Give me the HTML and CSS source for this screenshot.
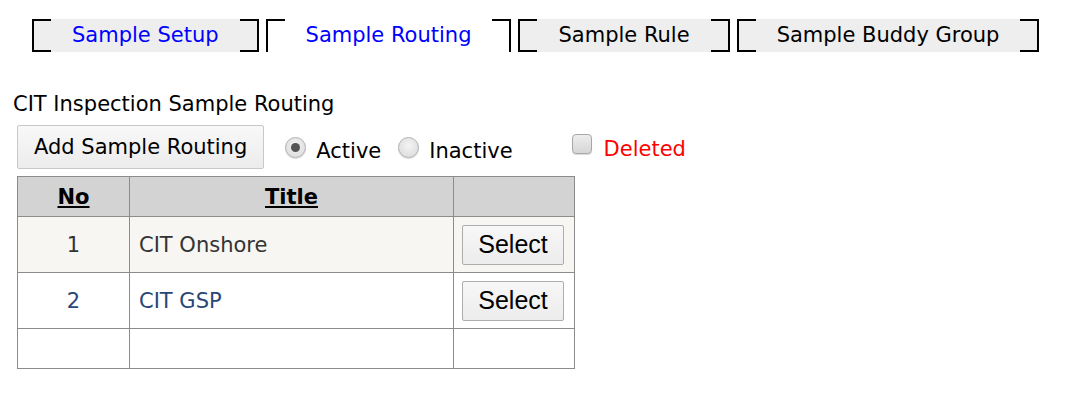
FILE: index.html
```html
<!DOCTYPE html>
<html>
<head>
<meta charset="utf-8">
<link rel="stylesheet" href="styles.css">
</head>
<body>
<div class="tabs">
  <a class="tab link">Sample Setup</a>
  <a class="tab link selected">Sample Routing</a>
  <a class="tab">Sample Rule</a>
  <a class="tab">Sample Buddy Group</a>
</div>
<div class="section-title">CIT Inspection Sample Routing</div>
<div class="toolbar">
  <button class="add-btn">Add Sample Routing</button>
  <label class="opt"><span class="radio checked"></span><span class="opt-text">Active</span></label>
  <label class="opt"><span class="radio"></span><span class="opt-text">Inactive</span></label>
  <label class="opt deleted"><span class="check"></span><span class="opt-text red">Deleted</span></label>
</div>
<table class="grid">
  <thead>
    <tr><th class="c-no">No</th><th class="c-title">Title</th><th class="c-act"></th></tr>
  </thead>
  <tbody>
    <tr class="row"><td class="num">1</td><td>CIT Onshore</td><td class="act"><button class="sel-btn">Select</button></td></tr>
    <tr class="alt"><td class="num">2</td><td>CIT GSP</td><td class="act"><button class="sel-btn">Select</button></td></tr>
    <tr class="empty"><td></td><td></td><td></td></tr>
  </tbody>
</table>
</body>
</html>
```
FILE: styles.css
```css
body {
  margin: 8px;
  font-family: "DejaVu Sans", Verdana, sans-serif;
  font-size: 21px;
  color: #000;
  background: #fff;
}
.tabs {
  display: flex;
  gap: 7px;
  margin: 11px 0 0 24px;
}
.tab {
  position: relative;
  display: block;
  height: 33px;
  line-height: 33px;
  padding: 0 40px 0 40px;
  background: #eeeeee;
  color: #000;
  white-space: nowrap;
}
.tab.link { color: #0000ff; }
.tab.selected { background: #fff; }
.tab::before,
.tab::after {
  content: "";
  position: absolute;
  top: 0;
  bottom: 0;
  width: 19px;
  border-top: 2px solid #000;
  border-bottom: 2px solid #000;
  box-sizing: border-box;
}
.tab::before { left: 0; border-left: 2px solid #000; }
.tab::after { right: 0; border-right: 2px solid #000; }
.tab.selected::before,
.tab.selected::after { border-bottom: none; }

.section-title {
  margin: 38px 0 0 5px;
  line-height: 28px;
}
.toolbar {
  display: flex;
  align-items: center;
  margin: 7px 0 0 9px;
  height: 44px;
}
.add-btn {
  font-family: inherit;
  font-size: 21px;
  height: 44px;
  padding: 0 16px;
  border: 1px solid #c8c8c8;
  border-radius: 2px;
  background: linear-gradient(#f8f8f8, #ececec);
  color: #000;
}
.opt {
  display: flex;
  align-items: center;
  margin-left: 21px;
}
.opt + .opt { margin-left: 17px; }
.opt.deleted { margin-left: 59px; margin-top: -6px; }
.opt-text { margin-left: 10px; padding-top: 7px; }
.opt.deleted .opt-text { padding-top: 10px; margin-left: 12px; }
.red { color: #ff0000; }
.radio {
  width: 19px;
  height: 19px;
  border-radius: 50%;
  border: 1px solid #b0b0b0;
  background: radial-gradient(circle at 50% 40%, #f4f4f4, #d8d8d8);
  box-shadow: 0 1px 1px rgba(0,0,0,0.15);
  position: relative;
  flex: none;
}
.radio.checked::after {
  content: "";
  position: absolute;
  left: 5px;
  top: 5px;
  width: 9px;
  height: 9px;
  border-radius: 50%;
  background: #555;
}
.check {
  width: 18px;
  height: 18px;
  border-radius: 4px;
  border: 1px solid #a8a8a8;
  background: linear-gradient(#ededed, #d6d6d6);
  box-shadow: 0 1px 1px rgba(0,0,0,0.15);
  flex: none;
}
.grid {
  border-collapse: collapse;
  margin: 7px 0 0 9px;
  color: #333333;
}
.grid th, .grid td {
  border: 1px solid #8c8c8c;
  padding: 0 9px;
}
.grid th {
  background: #d3d3d3;
  color: #000;
  font-weight: bold;
  text-decoration: underline;
  height: 39px;
}
.c-no { width: 93px; }
.c-title { width: 305px; }
.c-act { width: 102px; }
.grid .row td { background: #f7f6f3; color: #333333; height: 55px; }
.grid .alt td { background: #fff; color: #284775; height: 55px; }
.grid .empty td { height: 39px; }
.num { text-align: center; }
.grid td.act { text-align: left; padding: 0 10px 0 8px; }
.sel-btn {
  font-family: "Liberation Sans", Arial, sans-serif;
  font-size: 25px;
  width: 102px;
  height: 40px;
  padding: 0;
  border: 1px solid #adadad;
  border-radius: 2px;
  background: linear-gradient(#f7f7f7, #ececec);
  color: #000;
}
```
